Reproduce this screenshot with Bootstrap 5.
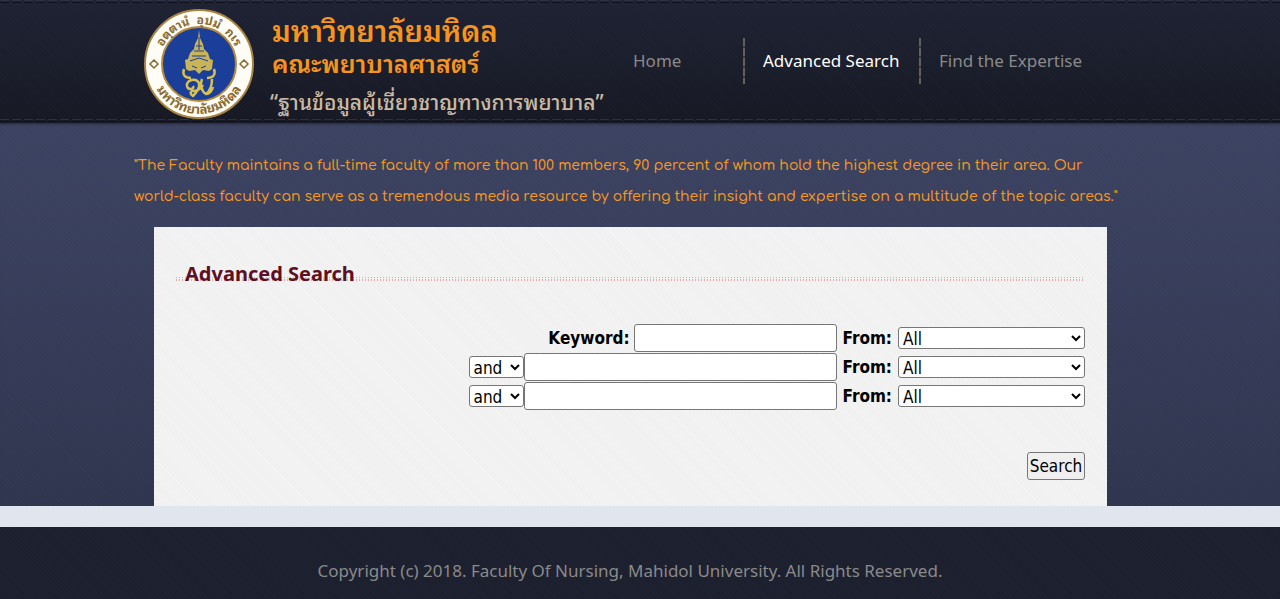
<!DOCTYPE html>
<html lang="en">
<head>
<meta charset="utf-8">
<meta name="viewport" content="width=device-width, initial-scale=1">
<title>Advanced Search</title>
<link href="https://cdn.jsdelivr.net/npm/bootstrap@5.3.0/dist/css/bootstrap.min.css" rel="stylesheet">
<script src="https://cdn.jsdelivr.net/npm/bootstrap@5.3.0/dist/js/bootstrap.bundle.min.js"></script>
<style>
  body { font-family: "Noto Sans", sans-serif; font-size: 17px; line-height: 24px; color: #000; background: #1c1f2e; }
  .page-wrap { max-width: 992px; }
  .band { padding-right: 20px; }
  .site-header { background-color: #1a1d2a; background-image: repeating-linear-gradient(45deg, rgba(255,255,255,.014) 0 1px, transparent 1px 3px), linear-gradient(#1f2233, #161923); }
  .stitch { height: 4px; background: repeating-linear-gradient(90deg, #2c3047 0 9px, transparent 9px 12px) 0 0 / 100% 1px no-repeat, repeating-linear-gradient(90deg, #10121b 0 9px, transparent 9px 12px) 0 2px / 100% 1px no-repeat; }
  .brand-text { font-family: "Noto Sans Thai Looped", "Loma", "Noto Sans Thai", "Noto Sans", sans-serif; font-weight: 600; color: #f7941d; white-space: nowrap; }
  .brand-name { font-size: 29px; line-height: 34px; }
  .brand-unit { font-size: 25px; line-height: 32px; }
  .brand-tag { font-size: 21px; line-height: 36px; padding-top: 5px; font-weight: 500; color: #cbb9a4; margin-left: -2px; }
  .menu-cell { color: #8a8a8a; line-height: 46px; width: 176px; padding-left: 20px; white-space: nowrap; }
  .menu-cell:first-child { width: 130px; }
  .menu-cell:hover, .menu-cell.active { color: #fff; }
  .menu-cell + .menu-cell { background: repeating-linear-gradient(#64615c 0 8px, #3d3c3c 8px 10px) 0 0 / 2px 100% no-repeat; }
  .main-menu { margin: 34px 31px 0 0; }
  .main-band { background-color: #363d5a; background-image: repeating-linear-gradient(45deg, rgba(255,255,255,.016) 0 1px, transparent 1px 3px), linear-gradient(#3c4362, #30354f); box-shadow: inset 0 3px 3px -2px rgba(0,0,0,.4); }
  .intro { font-family: "Comfortaa", "Lato", sans-serif; font-weight: 500; font-size: 14px; line-height: 31px; color: #f7991f; padding-top: 27px; margin-bottom: 15px; }
  .panel { margin: 0 19px 0 20px; padding: 32px 22px 26px; background-color: #f0f0f0; background-image: repeating-linear-gradient(45deg, rgba(255,255,255,.3) 0 1px, transparent 1px 3px); }
  .panel-title { font-size: 20px; line-height: 30px; font-weight: 700; color: #5f0f22; padding: 0 9px; background: repeating-linear-gradient(90deg, #f0a5a0 0 1px, transparent 1px 3px) 0 18px / 100% 1px no-repeat, repeating-linear-gradient(90deg, #f0a5a0 0 1px, transparent 1px 3px) 0 20px / 100% 2px no-repeat; }
  .query-form { padding-top: 34px; font-family: "DejaVu Sans Condensed", sans-serif; }
  .field-text, .field-pick, .go-btn { border: 1px solid #767676; border-radius: 3px; color: #000; }
  .field-text { height: 28px; background: #fff; }
  .field-pick { height: 22px; background: #fff; padding: 0; line-height: 20px; }
  .from-label { margin: 0 6px; }
  .wide-pick { width: 187px; }
  .join-pick { width: 55px; }
  .key-field { width: 203px; }
  .long-field { width: 313px; }
  .query-row { height: 29px; }
  .go-btn { height: 28px; width: 58px; padding: 0; margin-top: 42px; background: #efefef; }
  .pale-strip { height: 21px; background: #e1e5ee; }
  .site-footer { background: repeating-linear-gradient(45deg, rgba(255,255,255,.014) 0 1px, transparent 1px 3px), #1c1f2e; color: #8a8a8a; padding: 32px 20px 16px 0; }
</style>
</head>
<body>
<header class="site-header">
  <div class="stitch"></div>
  <div class="band">
    <div class="page-wrap mx-auto d-flex align-items-start">
      <a href="#" class="d-flex flex-grow-1 text-decoration-none ps-2">
        <svg class="mt-1" width="114" height="111" viewBox="0 0 114 111" role="img" aria-label="Mahidol University seal">
          <defs>
            <path id="arcTop" d="M17 56a40 40 0 0 1 80 0"/>
            <path id="arcLow" d="M8 57a49 49 0 0 0 98 0"/>
          </defs>
          <circle cx="57" cy="56" r="54" fill="#fffdf6" stroke="#a98545" stroke-width="2"/>
          <circle cx="57" cy="56" r="37" fill="#1b3f98" stroke="#b58a3c" stroke-width="2"/>
          <g fill="#8a6a2c" font-family="Noto Sans Thai Looped, Loma, Noto Sans Thai, sans-serif" font-size="12" font-weight="700">
            <text xml:space="preserve"><textPath href="#arcTop" startOffset="50%" text-anchor="middle">อตฺตานํ  อุปมํ  กเร</textPath></text>
            <text font-size="13"><textPath href="#arcLow" startOffset="50%" text-anchor="middle">มหาวิทยาลัยมหิดล</textPath></text>
          </g>
          <path d="M12 52l4 4-4 4-4-4zM102 52l4 4-4 4-4-4z" fill="none" stroke="#8a6a2c" stroke-width="1.5"/>
          <path d="M57 22l1 8 3 6 1 5 4 4 2 6 3 1-1 9-3 2-6-1-4 4-4-4-6 1-3-2-1-9 3-1 2-6 4-4 1-5 3-6z" fill="#c9b458"/>
          <path d="M54 38h6M52 43h10M50 48h14M48 53l9-3 9 3M50 58l5 2M64 58l-5 2M57 29v13" stroke="#1b3f98" stroke-width="1" fill="none"/>
          <path d="M42 61c-2 6 1 9 7 9M72 61c2 6-1 9-7 9M51 78c2 3-5 5-6 0-1-6 9-9 12-3 1 5-3 10-6 13-3-2-3-4-1-5 5 0 8-1 11-6M60 71c-2 5-1 12 4 15 4-3 6-9 6-15M64 86c3 0 6-3 7-7" stroke="#d8c04e" stroke-width="2.500" fill="none"/>
        </svg>
        <span class="brand-text d-flex flex-column ps-3 pt-2">
          <span class="brand-name" lang="th">มหาวิทยาลัยมหิดล</span>
          <span class="brand-unit" lang="th">คณะพยาบาลศาสตร์</span>
          <span class="brand-tag" lang="th">“ฐานข้อมูลผู้เชี่ยวชาญทางการพยาบาล”</span>
        </span>
      </a>
      <nav class="main-menu d-flex flex-shrink-0" aria-label="Main">
        <a class="menu-cell text-decoration-none" href="#">Home</a>
        <a class="menu-cell text-decoration-none active" href="#" aria-current="page">Advanced Search</a>
        <a class="menu-cell text-decoration-none" href="#">Find the Expertise</a>
      </nav>
    </div>
  </div>
  <div class="stitch"></div>
</header>
<main class="main-band band">
  <div class="page-wrap mx-auto">
    <p class="intro">"The Faculty maintains a full-time faculty of more than 100 members, 90 percent of whom hold the highest degree in their area. Our <br>world-class faculty can serve as a tremendous media resource by offering their insight and expertise on a multitude of the topic areas."</p>
    <section class="panel">
      <h1 class="panel-title mb-0">Advanced Search</h1>
      <form class="query-form d-flex flex-column align-items-end" onsubmit="return false">
        <div class="query-row d-flex align-items-center">
          <label class="fw-bold me-1" for="kw1">Keyword:</label>
          <input class="field-text key-field" id="kw1" type="text">
          <label class="from-label fw-bold" for="from1">From:</label>
          <select class="field-pick wide-pick" id="from1"><option>All</option></select>
        </div>
        <div class="query-row d-flex align-items-center">
          <select class="field-pick join-pick" aria-label="Operator 1"><option>and</option><option>or</option></select>
          <input class="field-text long-field" type="text" aria-label="Keyword 2">
          <label class="from-label fw-bold" for="from2">From:</label>
          <select class="field-pick wide-pick" id="from2"><option>All</option></select>
        </div>
        <div class="query-row d-flex align-items-center">
          <select class="field-pick join-pick" aria-label="Operator 2"><option>and</option><option>or</option></select>
          <input class="field-text long-field" type="text" aria-label="Keyword 3">
          <label class="from-label fw-bold" for="from3">From:</label>
          <select class="field-pick wide-pick" id="from3"><option>All</option></select>
        </div>
        <button class="go-btn" type="submit">Search</button>
      </form>
    </section>
  </div>
</main>
<div class="pale-strip"></div>
<footer class="site-footer text-center">Copyright (c) 2018. Faculty Of Nursing, Mahidol University. All Rights Reserved.</footer>
</body>
</html>
